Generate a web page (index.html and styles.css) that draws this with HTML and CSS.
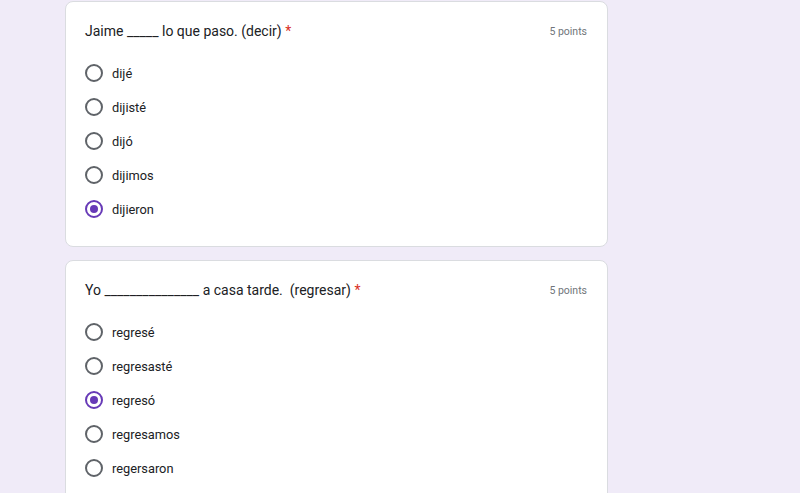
FILE: index.html
```html
<!DOCTYPE html>
<html>
<head>
<meta charset="utf-8">
<link rel="stylesheet" href="styles.css">
</head>
<body>
<div class="page">
  <div class="card">
    <div class="head">
      <div class="title">Jaime _____ lo que paso. (decir) <span class="req">*</span></div>
      <div class="pts">5 points</div>
    </div>
    <div class="opts">
      <div class="opt"><span class="radio"></span><span class="lbl">dijé</span></div>
      <div class="opt"><span class="radio"></span><span class="lbl">dijisté</span></div>
      <div class="opt"><span class="radio"></span><span class="lbl">dijó</span></div>
      <div class="opt"><span class="radio"></span><span class="lbl">dijimos</span></div>
      <div class="opt"><span class="radio on"></span><span class="lbl">dijieron</span></div>
    </div>
  </div>
  <div class="card">
    <div class="head">
      <div class="title">Yo _______________ a casa tarde.&nbsp; (regresar) <span class="req">*</span></div>
      <div class="pts">5 points</div>
    </div>
    <div class="opts">
      <div class="opt"><span class="radio"></span><span class="lbl">regresé</span></div>
      <div class="opt"><span class="radio"></span><span class="lbl">regresasté</span></div>
      <div class="opt"><span class="radio on"></span><span class="lbl">regresó</span></div>
      <div class="opt"><span class="radio"></span><span class="lbl">regresamos</span></div>
      <div class="opt"><span class="radio"></span><span class="lbl">regersaron</span></div>
    </div>
  </div>
</div>
</body>
</html>
```
FILE: styles.css
```css
html, body {
  margin: 0;
  padding: 0;
  background: #f0ebf8;
  font-family: Roboto, "Liberation Sans", Arial, sans-serif;
  color: #202124;
  overflow: hidden;
}
.page {
  width: 543px;
  margin-left: 65px;
  padding-top: 1px;
  display: flex;
  flex-direction: column;
  gap: 13px;
}
.card {
  background: #fff;
  border: 1px solid #dadce0;
  border-radius: 8px;
  padding: 19px 20px 20px 19px;
}
.head {
  display: flex;
  justify-content: space-between;
  align-items: center;
  height: 20px;
}
.title {
  font-size: 14px;
  line-height: 20px;
  color: #202124;
  white-space: pre;
}
.req { color: #d93025; }
.pts {
  font-size: 10.5px;
  color: #70757a;
}
.opts {
  margin-top: 15px;
  display: flex;
  flex-direction: column;
}
.opt {
  display: flex;
  align-items: center;
  height: 34px;
}
.radio {
  box-sizing: border-box;
  width: 18px;
  height: 18px;
  border: 2px solid #5f6368;
  border-radius: 50%;
  display: flex;
  align-items: center;
  justify-content: center;
}
.radio.on { border-color: #673ab7; }
.radio.on::after {
  content: "";
  width: 8px;
  height: 8px;
  border-radius: 50%;
  background: #673ab7;
}
.lbl {
  margin-left: 9px;
  font-size: 12.8px;
  color: #202124;
}
```
